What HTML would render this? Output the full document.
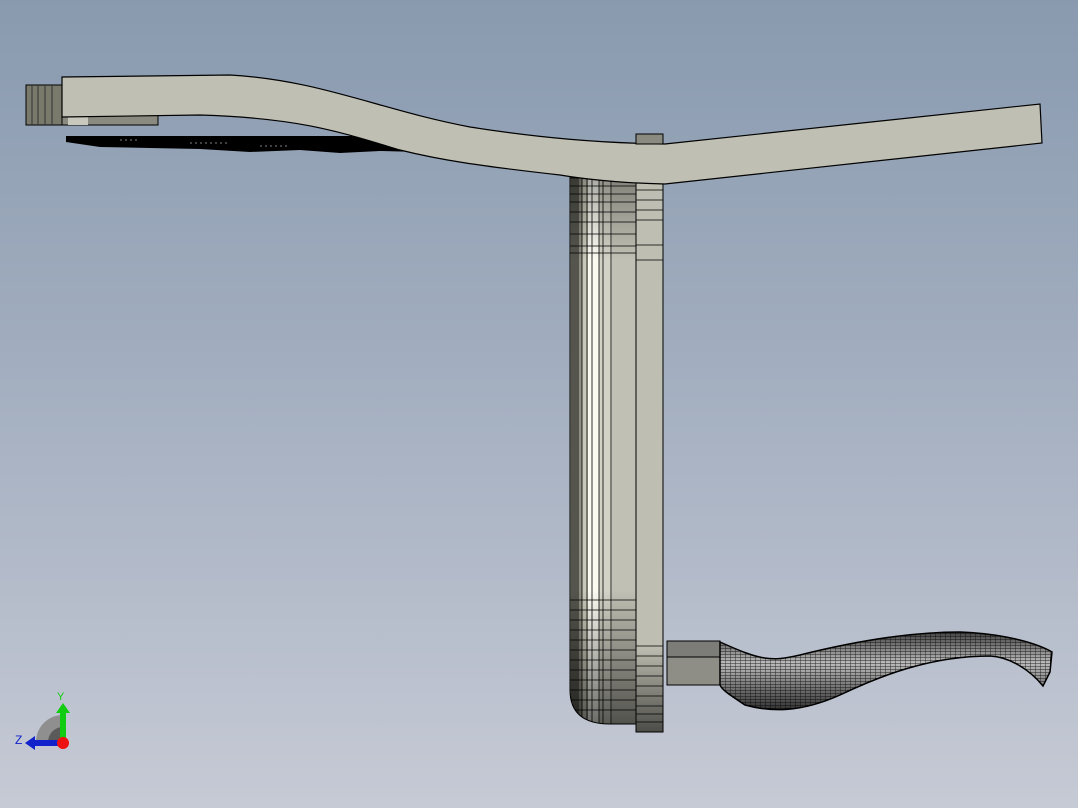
<!DOCTYPE html>
<html><head><meta charset="utf-8"><style>
html,body{margin:0;padding:0;width:1078px;height:808px;overflow:hidden}
body{background:linear-gradient(#899aaf 0%,#a5b0c1 50%,#c6cad5 100%)}
svg{position:absolute;left:0;top:0}
</style></head><body>
<svg width="1078" height="808" viewBox="0 0 1078 808">
<defs>
<linearGradient id="cylb" x1="0" y1="0" x2="0" y2="1"><stop offset="0" stop-color="#000" stop-opacity="0"/><stop offset="1" stop-color="#000" stop-opacity="0.6"/></linearGradient>
<linearGradient id="cylt" x1="0" y1="0" x2="0" y2="1"><stop offset="0" stop-color="#000" stop-opacity="0.35"/><stop offset="1" stop-color="#000" stop-opacity="0"/></linearGradient>
<linearGradient id="rib" x1="0" y1="0" x2="0" y2="1"><stop offset="0" stop-color="#444"/><stop offset="0.4" stop-color="#bbb"/><stop offset="1" stop-color="#333"/></linearGradient>
<pattern id="mesh" width="5" height="3" patternUnits="userSpaceOnUse"><path d="M0 0H5M0 0V3" stroke="#000" stroke-width="0.9" fill="none"/></pattern>
</defs>
<!-- black fuzz under top bar -->
<path d="M66 136 L420 136 L420 152 L380 151 L340 153 L300 150 L250 152 L200 149 L150 148 L100 147 L66 142Z" fill="#000"/>
<path d="M190 143h40M260 146h30M120 140h20" stroke="#fff" stroke-width="0.6" stroke-dasharray="2 3"/>
<!-- left block -->
<rect x="26" y="85" width="36" height="40" fill="#7a7a6c" stroke="#000"/>
<path d="M32 85V125M38 85V125M45 85V125M52 85V125" stroke="#333"/>
<rect x="62" y="115" width="96" height="10" fill="#8a8a80" stroke="#000"/>
<rect x="68" y="116" width="20" height="9" fill="#c8c8bc"/>
<!-- cylinder -->
<clipPath id="cc"><path d="M570 175 H636 V724 H610 Q570 724 570 690 Z"/></clipPath>
<g clip-path="url(#cc)">
<rect x="570" y="170" width="12" height="560" fill="#8e8e82"/>
<rect x="582" y="170" width="6" height="560" fill="#c8c8b8"/>
<rect x="588" y="170" width="11" height="560" fill="#fbfbf2"/>
<rect x="599" y="170" width="13" height="560" fill="#d2d2c6"/>
<rect x="612" y="170" width="24" height="560" fill="#c0c0b4"/>
<rect x="570" y="170" width="66" height="90" fill="url(#cylt)"/>
<rect x="570" y="590" width="66" height="140" fill="url(#cylb)"/>
<g stroke="#000" stroke-width="0.8">
<path d="M572 170V730M574 170V730M576 170V730M578 170V730M582 170V730M587 170V730M592 170V730M599 170V730M603 170V730M611 170V730"/>
<path d="M570 178H636M570 186H636M570 194H636M570 202H636M570 212H636M570 222H636M570 234H636M570 246H636M570 253H636M570 600H636M570 610H636M570 620H636M570 630H636M570 640H636M570 650H636M570 660H636M570 670H636M570 680H636M570 690H636M570 700H636M570 710H636"/>
</g>
</g>
<path d="M570 175 H636 V724 H610 Q570 724 570 690 Z" fill="none" stroke="#000"/>
<!-- flange plate -->
<rect x="636" y="134" width="27" height="598" fill="#bebeb2" stroke="#000"/>
<g stroke="#000" stroke-width="0.8"><path d="M636 142H663M636 150H663M636 158H663M636 170H663M636 180H663M636 190H663M636 200H663M636 210H663M636 220H663M636 245H663M636 260H663M636 646H663M636 656H663M636 666H663M636 676H663M636 686H663M636 696H663M636 706H663M636 714H663M636 722H663"/></g>
<rect x="636" y="646" width="27" height="86" fill="url(#cylb)"/>
<!-- top bar -->
<path d="M62 77 L230 75 C320 80 380 110 470 127 C540 138 600 143 665 144 L1040 104 L1042 143 L665 184 C620 183 590 180 560 175 C480 166 440 160 400 150 C340 132 300 118 200 115 L62 117Z" fill="#bfbfb3" stroke="#000" stroke-width="1.2"/>
<rect x="636" y="134" width="27" height="10" fill="#8a8a80" stroke="#000"/>
<!-- lower block -->
<rect x="667" y="641" width="53" height="44" fill="#7c7c78" stroke="#000"/>
<rect x="667" y="657" width="53" height="28" fill="#8e8e86" stroke="#000"/>
<!-- ribbon -->
<path d="M720 642 C760 660 770 662 800 655 C880 635 930 632 960 632 C1010 634 1040 645 1052 652 L1050 672 L1043 686 C1030 670 1010 657 990 656 C930 656 880 676 840 695 C800 713 770 712 745 705 C730 695 722 690 720 685Z" fill="url(#rib)" stroke="#000" stroke-width="1.5"/>
<path d="M720 642 C760 660 770 662 800 655 C880 635 930 632 960 632 C1010 634 1040 645 1052 652 L1050 672 L1043 686 C1030 670 1010 657 990 656 C930 656 880 676 840 695 C800 713 770 712 745 705 C730 695 722 690 720 685Z" fill="url(#mesh)" opacity="0.8"/>
<!-- triad -->
<path d="M36 742 A27 27 0 0 1 63 715 L63 742Z" fill="#8f8f8f"/>
<path d="M48 742 A15 15 0 0 1 63 727 L63 742Z" fill="#5a5a5a"/>
<rect x="60" y="712" width="6" height="30" fill="#1c1"/>
<path d="M56 713 L63 703 L70 713Z" fill="#1c1"/>
<rect x="34" y="740" width="28" height="6" fill="#12c"/>
<path d="M35 736 L25 743 L35 750Z" fill="#12c"/>
<circle cx="63" cy="743" r="6" fill="#e11"/>
<text x="57" y="700" font-family="Liberation Sans, sans-serif" font-size="11" fill="#1c1">Y</text>
<text x="15" y="744" font-family="Liberation Sans, sans-serif" font-size="12" fill="#12c">Z</text>
</svg>
</body></html>
